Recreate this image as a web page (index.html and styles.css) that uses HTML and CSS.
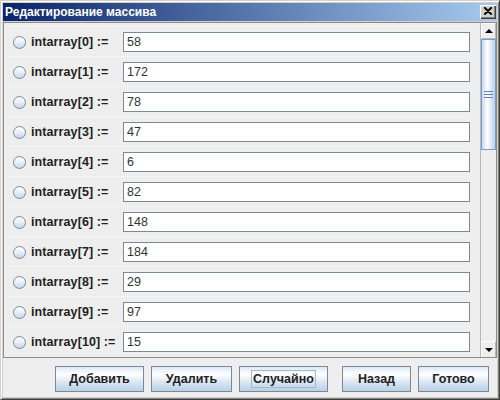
FILE: index.html
```html
<!DOCTYPE html>
<html>
<head>
<meta charset="utf-8">
<link rel="stylesheet" href="styles.css">
</head>
<body>
<div class="window">
  <div class="titlebar">
    <span class="title">Редактирование массива</span>
    <span class="close"><svg width="10" height="9" viewBox="0 0 10 9"><path d="M1 0.5 L8 7.5 M2 0.5 L9 7.5 M8 0.5 L1 7.5 M9 0.5 L2 7.5" stroke="#000" stroke-width="1.2" fill="none"/></svg></span>
  </div>
  <div class="content">
    <div class="scrollpane">
      <div class="list">
        <div class="row"><span class="radio"></span><span class="label">intarray[0] :=</span><span class="field">58</span></div>
        <div class="row"><span class="radio"></span><span class="label">intarray[1] :=</span><span class="field">172</span></div>
        <div class="row"><span class="radio"></span><span class="label">intarray[2] :=</span><span class="field">78</span></div>
        <div class="row"><span class="radio"></span><span class="label">intarray[3] :=</span><span class="field">47</span></div>
        <div class="row"><span class="radio"></span><span class="label">intarray[4] :=</span><span class="field">6</span></div>
        <div class="row"><span class="radio"></span><span class="label">intarray[5] :=</span><span class="field">82</span></div>
        <div class="row"><span class="radio"></span><span class="label">intarray[6] :=</span><span class="field">148</span></div>
        <div class="row"><span class="radio"></span><span class="label">intarray[7] :=</span><span class="field">184</span></div>
        <div class="row"><span class="radio"></span><span class="label">intarray[8] :=</span><span class="field">29</span></div>
        <div class="row"><span class="radio"></span><span class="label">intarray[9] :=</span><span class="field">97</span></div>
        <div class="row"><span class="radio"></span><span class="label">intarray[10] :=</span><span class="field">15</span></div>
      </div>
      <div class="scrollbar">
        <div class="sb-btn"><span class="arrow-up"></span></div>
        <div class="thumb"><span class="grip"></span></div>
        <div class="track"></div>
        <div class="sb-btn"><span class="arrow-down"></span></div>
      </div>
    </div>
    <div class="buttons">
      <span class="btn w89">Добавить</span>
      <span class="btn w81">Удалить</span>
      <span class="btn w89 focused"><span class="focus">Случайно</span></span>
      <span class="btn w69 gap">Назад</span>
      <span class="btn w71">Готово</span>
    </div>
  </div>
</div>
</body>
</html>
```
FILE: styles.css
```css
html, body {
  margin: 0;
  padding: 0;
  background: #d4d0c8;
}
.window {
  width: 500px;
  height: 400px;
  box-sizing: border-box;
  border-top: 1px solid #d4d0c8;
  border-left: 1px solid #d4d0c8;
  border-right: 1px solid #404040;
  border-bottom: 1px solid #404040;
  padding: 2px;
  background: #d4d0c8;
  box-shadow: inset 1px 1px 0 #ffffff, inset -1px -1px 0 #808080;
  display: flex;
  flex-direction: column;
  font-family: "Liberation Sans", Arial, sans-serif;
}
.titlebar {
  height: 18px;
  background: linear-gradient(to right, #0a246a, #a6caf0);
  display: flex;
  align-items: center;
  justify-content: space-between;
  padding-left: 2px;
  padding-right: 1px;
}
.title {
  color: #ffffff;
  font-weight: bold;
  font-size: 12px;
}
.close {
  width: 16px;
  height: 14px;
  box-sizing: border-box;
  background: #d4d0c8;
  box-shadow: inset 1px 1px 0 #ffffff, inset -1px -1px 0 #404040, inset -2px -2px 0 #808080;
  display: flex;
  align-items: center;
  justify-content: center;
  padding-bottom: 1px;
}
.content {
  flex: 1;
  margin-top: 1px;
  background: #eeeeee;
  display: flex;
  flex-direction: column;
}
.scrollpane {
  height: 336px;
  box-sizing: border-box;
  border: 1px solid #8c8c8c;
  display: flex;
}
.list {
  flex: 1;
  padding-top: 3px;
  overflow: hidden;
}
.row {
  height: 30px;
  box-sizing: border-box;
  margin-left: 5px;
  margin-right: 10px;
  border-top: 1px dotted #fbfbfb;
  display: flex;
  align-items: center;
}
.radio {
  width: 13px;
  height: 13px;
  box-sizing: border-box;
  margin-left: 4px;
  margin-top: 1px;
  border: 1px solid #7a8a99;
  border-radius: 50%;
  background: linear-gradient(to bottom, #ffffff 0%, #f0f5fa 35%, #c6d7ea 100%);
}
.label {
  width: 92px;
  margin-left: 5px;
  font-weight: bold;
  font-size: 12.5px;
  letter-spacing: 0.1px;
  color: #222222;
  white-space: nowrap;
}
.field {
  flex: 1;
  height: 20px;
  box-sizing: border-box;
  border: 1px solid #7a8a99;
  background: #ffffff;
  padding-left: 3px;
  font-size: 12.5px;
  color: #333333;
  display: flex;
  align-items: center;
}
.scrollbar {
  width: 16px;
  box-sizing: border-box;
  border-left: 1px solid #b8b8b8;
  display: flex;
  flex-direction: column;
  background: #eeeeee;
}
.sb-btn {
  height: 16px;
  box-sizing: border-box;
  background: #eeeeee;
  border: 1px solid #ffffff;
  border-right-color: #b8b8b8;
  border-bottom-color: #b8b8b8;
  display: flex;
  align-items: center;
  justify-content: center;
}
.arrow-up {
  width: 0;
  height: 0;
  border-left: 4px solid transparent;
  border-right: 4px solid transparent;
  border-bottom: 4px solid #000000;
}
.arrow-down {
  width: 0;
  height: 0;
  border-left: 4px solid transparent;
  border-right: 4px solid transparent;
  border-top: 4px solid #000000;
}
.thumb {
  height: 111px;
  box-sizing: border-box;
  border: 1px solid #7a9ad4;
  background: linear-gradient(to right, #c8d8ef 0%, #ffffff 40%, #dde8f3 70%, #b8cfe5 100%);
  display: flex;
  align-items: center;
  justify-content: center;
}
.grip {
  width: 9px;
  height: 5px;
  border-top: 1px solid #6382bf;
  border-bottom: 1px solid #6382bf;
  background: linear-gradient(#6382bf, #6382bf) center / 100% 1px no-repeat;
}
.track {
  flex: 1;
}
.sb-btn:last-child {
  border-bottom: none;
}
.buttons {
  display: flex;
  padding-top: 8px;
  padding-left: 52px;
  gap: 7px;
}
.btn {
  height: 26px;
  box-sizing: border-box;
  border: 1px solid #7a8a99;
  background: linear-gradient(to bottom, #dde8f3 0%, #ffffff 30%, #e3ecf6 55%, #b8cfe5 100%);
  font-weight: bold;
  font-size: 12.5px;
  color: #222222;
  display: flex;
  align-items: center;
  justify-content: center;
}
.w89 { width: 89px; }
.w81 { width: 81px; }
.w69 { width: 69px; }
.w71 { width: 71px; }
.gap { margin-left: 7px; }
.focus {
  border: 1px solid #a3b8cc;
  padding: 1px 1px;
}
```
